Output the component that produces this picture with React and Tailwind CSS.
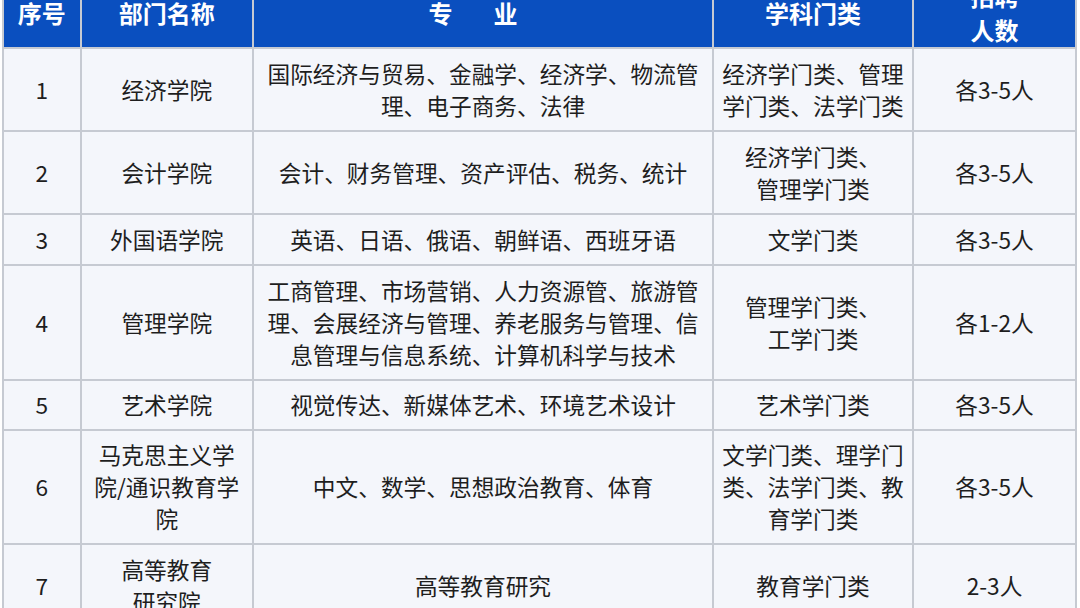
import React from "react";

const rows = [
  {
    no: "1",
    h: "h-[83px]",
    dept: ["经济学院"],
    major: ["国际经济与贸易、金融学、经济学、物流管", "理、电子商务、法律"],
    cat: ["经济学门类、管理", "学门类、法学门类"],
    count: "各3-5人",
  },
  {
    no: "2",
    h: "h-[83px]",
    dept: ["会计学院"],
    major: ["会计、财务管理、资产评估、税务、统计"],
    cat: ["经济学门类、", "管理学门类"],
    count: "各3-5人",
  },
  {
    no: "3",
    h: "h-[51px]",
    dept: ["外国语学院"],
    major: ["英语、日语、俄语、朝鲜语、西班牙语"],
    cat: ["文学门类"],
    count: "各3-5人",
  },
  {
    no: "4",
    h: "h-[115px]",
    dept: ["管理学院"],
    major: [
      "工商管理、市场营销、人力资源管、旅游管",
      "理、会展经济与管理、养老服务与管理、信",
      "息管理与信息系统、计算机科学与技术",
    ],
    cat: ["管理学门类、", "工学门类"],
    count: "各1-2人",
  },
  {
    no: "5",
    h: "h-[50px]",
    dept: ["艺术学院"],
    major: ["视觉传达、新媒体艺术、环境艺术设计"],
    cat: ["艺术学门类"],
    count: "各3-5人",
  },
  {
    no: "6",
    h: "h-[114px]",
    dept: ["马克思主义学", "院/通识教育学", "院"],
    major: ["中文、数学、思想政治教育、体育"],
    cat: ["文学门类、理学门", "类、法学门类、教", "育学门类"],
    count: "各3-5人",
  },
  {
    no: "7",
    h: "h-[83px]",
    dept: ["高等教育", "研究院"],
    major: ["高等教育研究"],
    cat: ["教育学门类"],
    count: "2-3人",
  },
];

function Lines({ items }) {
  return items.map((t, i) => (
    <React.Fragment key={i}>
      {i > 0 && <br />}
      {t}
    </React.Fragment>
  ));
}

export default function App() {
  const th = "border-2 border-[#c6cad2] px-2 py-0 font-bold leading-[34px] text-white whitespace-nowrap";
  const td = "border-2 border-[#c6cad2] px-2 py-0 leading-[32px] whitespace-nowrap";

  return (
    <div
      className="h-[608px] w-[1080px] overflow-hidden bg-white"
      style={{ fontFamily: '"Noto Sans CJK SC", "Noto Sans", sans-serif' }}
    >
      <table className="-mt-[23px] ml-[2px] w-[1075px] table-fixed border-collapse text-center text-[22.7px] text-[#1e1e1e]">
        <colgroup>
          <col className="w-[77.5px]" />
          <col className="w-[172.5px]" />
          <col className="w-[460px]" />
          <col className="w-[200px]" />
          <col className="w-[163px]" />
        </colgroup>
        <thead>
          <tr className="h-[69px] bg-[#0a4fbf] text-[24px]">
            <th className={th}>序号</th>
            <th className={th}>部门名称</th>
            <th className={th}>
              <span className="inline-flex gap-[41px] pr-[20px]">
                <span>专</span>
                <span>业</span>
              </span>
            </th>
            <th className={th}>学科门类</th>
            <th className={th}>
              招聘
              <br />
              人数
            </th>
          </tr>
        </thead>
        <tbody className="bg-[#f4f6fb]">
          {rows.map((r) => (
            <tr key={r.no} className={r.h}>
              <td className={td}>{r.no}</td>
              <td className={td}>
                <Lines items={r.dept} />
              </td>
              <td className={td}>
                <Lines items={r.major} />
              </td>
              <td className={td}>
                <Lines items={r.cat} />
              </td>
              <td className={td}>{r.count}</td>
            </tr>
          ))}
        </tbody>
      </table>
    </div>
  );
}
